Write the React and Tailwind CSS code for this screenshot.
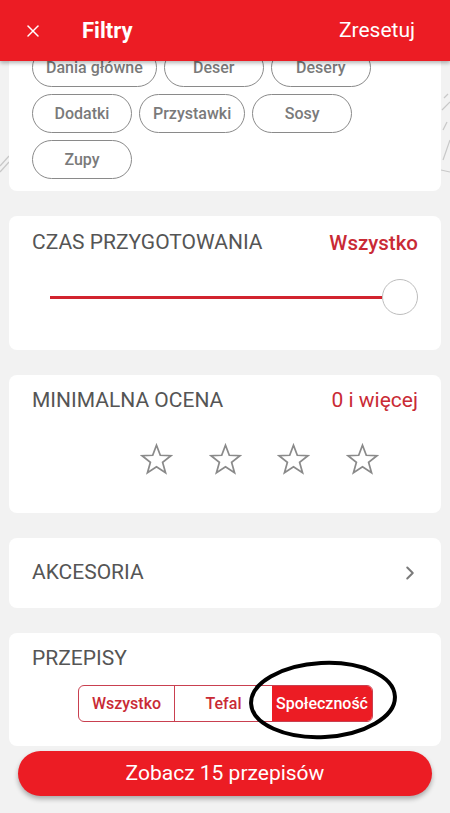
import { X, ChevronRight } from 'lucide-react';

const chipRows = [
    ['Dania główne', 'Deser', 'Desery'],
    ['Dodatki', 'Przystawki', 'Sosy'],
    ['Zupy'],
];

const Star = () => (
    <svg width="35" height="35" viewBox="0 0 24 24" fill="none" stroke="#8a8a8a" strokeWidth="1.2" strokeLinejoin="miter">
        <path d="M12 2.2l2.6 6.9 7.3.3-5.7 4.6 2 7.1L12 17l-6.2 4.1 2-7.1-5.7-4.6 7.3-.3z" />
    </svg>
);

const Card = ({ className = '', children }) => (
    <div className={`bg-white rounded-lg ${className}`}>{children}</div>
);

export default function App() {
    return (
        <div className="relative w-[450px] h-[813px] overflow-hidden bg-[#f2f2f2] font-['Roboto',sans-serif]">
            {/* faint sketch lines behind the cards */}
            <svg className="absolute left-0 top-0" width="450" height="200" stroke="#c8c8c8" strokeWidth="1.2">
                <line x1="0" y1="166" x2="9" y2="156" />
                <line x1="0" y1="172" x2="9" y2="162" />
                <line x1="444" y1="98" x2="448" y2="94" />
                <line x1="442" y1="110" x2="450" y2="102" />
                <line x1="443" y1="130" x2="447" y2="122" />
                <line x1="443" y1="160" x2="450" y2="140" />
                <line x1="441" y1="170" x2="450" y2="172" />
            </svg>

            {/* header */}
            <div className="absolute top-0 left-0 right-0 z-20 h-[61px] bg-[#ec1c24] flex items-center shadow-[0_2px_4px_rgba(0,0,0,0.3)]">
                <X className="ml-[23px] text-white" size={20} strokeWidth={1.8} />
                <span className="ml-[39px] text-white text-[22px] font-bold">Filtry</span>
                <span className="ml-auto mr-[35px] text-white text-[21px]">Zresetuj</span>
            </div>

            <div className="relative z-10 flex flex-col gap-[25px] px-[9px]">
                {/* categories */}
                <Card className="pt-[48px] pb-[12px] px-[23px] flex flex-col gap-[7px] rounded-t-none">
                    {chipRows.map((row, i) => (
                        <div key={i} className="flex gap-[7px]">
                            {row.map((c) => (
                                <div key={c} className="h-[39px] min-w-[100px] px-[13px] rounded-full border border-[#8a8a8a] flex items-center justify-center text-[16px] font-medium text-[#7a7a7a]">
                                    {c}
                                </div>
                            ))}
                        </div>
                    ))}
                </Card>

                {/* prep time */}
                <Card className="h-[134px] pt-[15px] px-[23px] flex flex-col">
                    <div className="h-[24px] flex items-center justify-between">
                        <span className="text-[21px] text-[#555]">CZAS PRZYGOTOWANIA</span>
                        <span className="text-[20.5px] font-medium text-[#c92a35]">Wszystko</span>
                    </div>
                    <div className="mt-[24px] ml-[18px] flex items-center">
                        <div className="flex-1 h-[3px] bg-[#d2232e]" />
                        <div className="w-[36px] h-[36px] rounded-full border border-[#bdbdbd] bg-white" />
                    </div>
                </Card>

                {/* rating */}
                <Card className="h-[138px] pt-[14px] px-[23px] flex flex-col">
                    <div className="h-[24px] flex items-center justify-between">
                        <span className="text-[21px] text-[#555]">MINIMALNA OCENA</span>
                        <span className="text-[21px] text-[#c92a35]">0 i więcej</span>
                    </div>
                    <div className="mt-[29px] pl-[107px] flex gap-[33.5px]">
                        <Star />
                        <Star />
                        <Star />
                        <Star />
                    </div>
                </Card>

                {/* accessories */}
                <Card className="h-[70px] pl-[23px] pr-[20px] flex items-center justify-between">
                    <span className="text-[21px] text-[#555]">AKCESORIA</span>
                    <ChevronRight className="text-[#7a7a7a]" size={22} strokeWidth={2.2} />
                </Card>

                {/* source */}
                <Card className="h-[113px] pt-[14px] px-[23px] flex flex-col">
                    <div className="h-[24px] flex items-center">
                        <span className="text-[21px] text-[#555]">PRZEPISY</span>
                    </div>
                    <div className="mt-[14px] ml-[46px] w-[295px] h-[37px] flex rounded-md border border-[#c94050] overflow-hidden text-[16px] font-medium">
                        <div className="w-[96px] flex items-center justify-center text-[#c92a35] border-r border-[#c94050]">Wszystko</div>
                        <div className="w-[97px] flex items-center justify-center text-[#c92a35]">Tefal</div>
                        <div className="flex-1 flex items-center justify-center bg-[#ec1c24] text-white">Społeczność</div>
                    </div>
                </Card>
            </div>

            {/* annotation ring */}
            <svg className="absolute left-[247px] top-[659px] z-20" width="152" height="82" viewBox="0 0 152 82">
                <ellipse cx="76" cy="41" rx="72" ry="37" fill="none" stroke="#000" strokeWidth="4" transform="rotate(-3 76 41)" />
            </svg>

            {/* CTA */}
            <div className="absolute left-[18px] right-[18px] top-[751px] z-20 h-[45px] rounded-full bg-[#ec1c24] flex items-center justify-center text-white text-[21px] shadow-[0_3px_5px_rgba(0,0,0,0.3)]">
                Zobacz 15 przepisów
            </div>
        </div>
    );
}
